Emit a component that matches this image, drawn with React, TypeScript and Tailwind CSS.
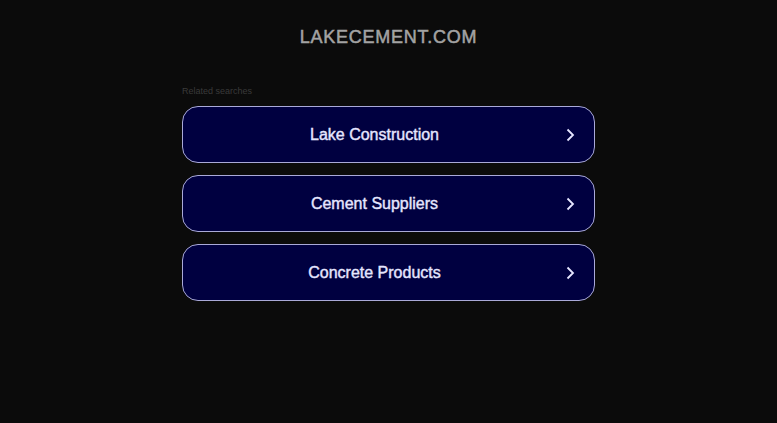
import React from 'react';

const searches = ['Lake Construction', 'Cement Suppliers', 'Concrete Products'];

const Chevron = () => (
  <svg width="12" height="14" viewBox="0 0 12 14" fill="none" className="absolute right-[18px] top-1/2 -translate-y-1/2">
    <path d="M3.5 1.5 L9 7 L3.5 12.5" stroke="#e6e6ff" strokeWidth="1.8" />
  </svg>
);

export default function App() {
  return (
    <div className="min-h-[423px] w-full bg-[#0b0b0b] font-['Liberation_Sans',Arial,sans-serif]">
      <div className="pt-[26px] text-center text-[18px] leading-[22px] tracking-[0.75px] text-[#a3a3a3] [-webkit-text-stroke:0.5px_#a3a3a3]">
        LAKECEMENT.COM
      </div>
      <div className="mx-auto mt-[37px] w-[413px]">
        <div className="text-[9px] leading-[12px] text-[#3a3a3a]">Related searches</div>
        <div className="mt-[9px] flex flex-col gap-[12px]">
          {searches.map((s) => (
            <a
              key={s}
              href="#"
              className="relative flex h-[57px] items-center justify-center rounded-[16px] border border-[#a9a9d8] bg-[#000040] pr-[28px] text-[16px] text-[#e6e6ff] [-webkit-text-stroke:0.4px_#e6e6ff]"
            >
              {s}
              <Chevron />
            </a>
          ))}
        </div>
      </div>
    </div>
  );
}
